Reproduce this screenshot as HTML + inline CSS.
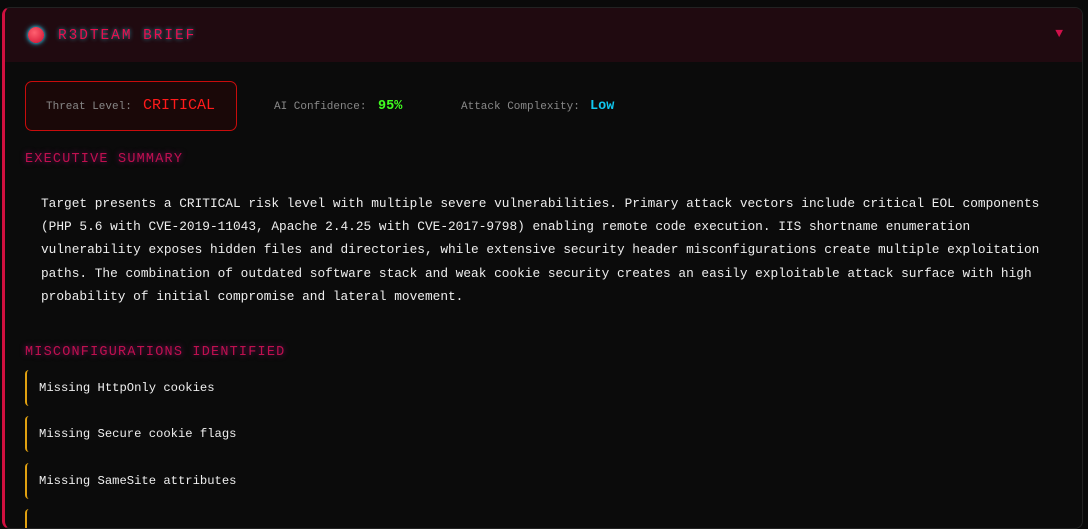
<!DOCTYPE html>
<html><head><style>
html,body{margin:0;padding:0;background:#0a0a0a;width:1088px;height:514px;overflow:hidden;font-family:"Liberation Mono",monospace;}
.card{position:absolute;left:2px;top:7px;width:1077px;height:520px;background:#0b0b0b;border:1px solid #222;border-left:3px solid #d0103f;border-radius:8px;overflow:hidden;}
.hdr{height:54px;background:#200a10;position:relative;}
.dot{position:absolute;left:23px;top:19px;width:16px;height:16px;border-radius:50%;background:radial-gradient(circle at 40% 35%,#ff6070,#d01030);box-shadow:0 0 6px #2bb0d0,0 0 3px #2bb0d0;}
.title{position:absolute;left:53px;top:19px;font-size:14.4px;letter-spacing:2px;color:#e8104e;text-shadow:0 0 4px #2a9ab0;line-height:19px;}
.arrow{position:absolute;right:19px;top:18px;color:#d0104a;font-size:13px;}
.tbox{position:absolute;left:20px;top:73px;width:210px;height:48px;border:1px solid #c80c0c;border-radius:7px;background:#1a0808;}
.lab{position:absolute;font-size:11px;color:#888;line-height:14px;}
.val{position:absolute;font-size:13.5px;font-weight:bold;line-height:16px;}
h3{position:absolute;margin:0;font-weight:normal;font-size:13.5px;letter-spacing:1.2px;color:#c0104e;text-shadow:0 0 6px #7a1060;line-height:16px;}
.p{position:absolute;left:36px;top:184px;width:1025px;font-size:12.8px;line-height:23.2px;color:#eee;}
.item{position:absolute;left:20px;width:1040px;height:36px;border-left:2px solid #e0a010;border-radius:4px;font-size:12.2px;color:#eee;line-height:36px;padding-left:12px;box-sizing:border-box;}
</style></head><body>
<div class="card">
<div class="hdr"><div class="dot"></div><div class="title">R3DTEAM BRIEF</div><div class="arrow">▼</div></div>
<div class="tbox"></div>
<div class="lab" style="left:41px;top:92px">Threat Level:</div>
<div class="val" style="left:138px;top:90px;color:#ff1a1a;font-weight:normal;font-size:15px">CRITICAL</div>
<div class="lab" style="left:269px;top:92px">AI Confidence:</div>
<div class="val" style="left:373px;top:91px;color:#40ff20">95%</div>
<div class="lab" style="left:456px;top:92px">Attack Complexity:</div>
<div class="val" style="left:585px;top:91px;color:#10c8f0">Low</div>
<h3 style="left:20px;top:144px">EXECUTIVE SUMMARY</h3>
<div class="p">Target presents a CRITICAL risk level with multiple severe vulnerabilities. Primary attack vectors include critical EOL components (PHP 5.6 with CVE-2019-11043, Apache 2.4.25 with CVE-2017-9798) enabling remote code execution. IIS shortname enumeration vulnerability exposes hidden files and directories, while extensive security header misconfigurations create multiple exploitation paths. The combination of outdated software stack and weak cookie security creates an easily exploitable attack surface with high probability of initial compromise and lateral movement.</div>
<h3 style="left:20px;top:337px">MISCONFIGURATIONS IDENTIFIED</h3>
<div class="item" style="top:362px">Missing HttpOnly cookies</div>
<div class="item" style="top:408px">Missing Secure cookie flags</div>
<div class="item" style="top:455px">Missing SameSite attributes</div>
<div class="item" style="top:501px"></div>
</div>
</body></html>
